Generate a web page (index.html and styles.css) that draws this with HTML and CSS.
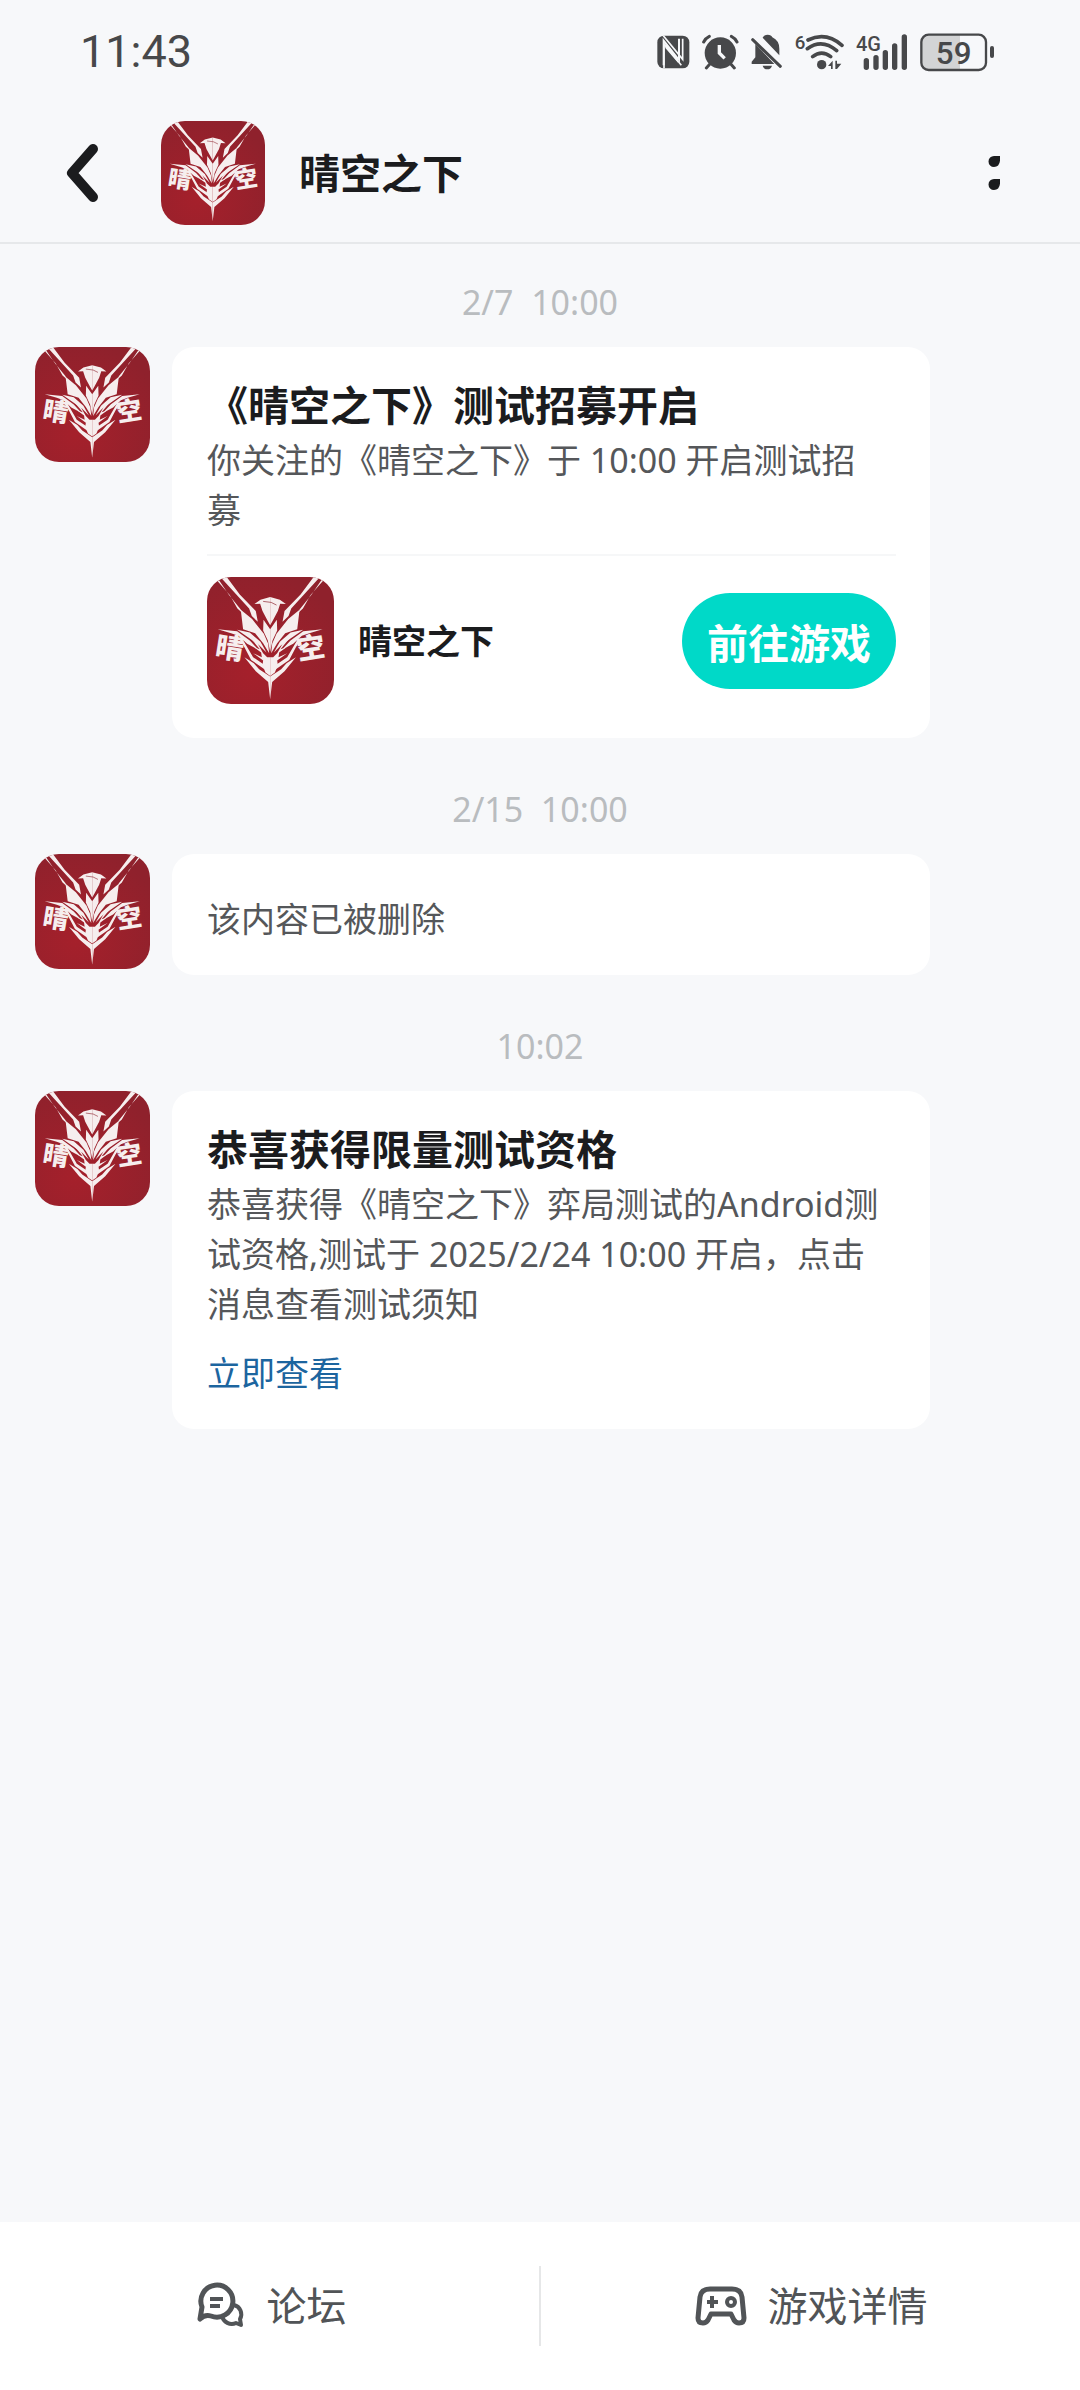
FILE: index.html
```
<!DOCTYPE html>
<html lang="zh-CN">
<head>
    <meta charset="UTF-8">
    <meta name="viewport" content="width=device-width, initial-scale=1.0">
    <title>晴空之下</title>
    <link rel="stylesheet" href="styles.css">
</head>
<body>
    <!-- 游戏图标，下面用 use 引用 -->
    <svg class="defs" aria-hidden="true">
        <defs>
            <radialGradient id="red" cx="35%" cy="75%" r="80%">
                <stop offset="0" stop-color="#a5202b"></stop>
                <stop offset="1" stop-color="#8f212c"></stop>
            </radialGradient>
            <g id="wing">
                <path d="M62 22H81L120 74L168 124L174 156L156 139L148 116Z"></path>
                <path d="M50 30L58 32L88 76L123 119L126 128L113 116L90 76Z"></path>
                <path d="M123 120L157 148L192 192L205 222L208 250L190 220L166 190L130 178Z"></path>
                <path d="M211 82L182 90L164 103L181 102L188 124L203 152L211 166Z"></path>
                <path d="M191 150L211 178V246L204 212L190 182Z"></path>
                <path d="M54 178L112 184L150 212L176 240L142 222L116 198L94 190Z"></path>
                <path d="M112 180L150 188L182 216L200 248L178 226L150 206Z"></path>
                <path d="M142 192L174 222L190 250L202 262L211 262V318L197 308L188 286L190 272L160 250L186 262L184 248L162 232L180 238Z"></path>
                <path d="M116 204L132 214L160 262L192 284L194 298L154 270L134 232Z"></path>
                <path d="M134 262L162 280L178 298L211 320V388L205 336L168 304Z"></path>
            </g>
            <symbol id="logo" viewBox="22 22 380 380">
                <rect x="22" y="22" width="380" height="380" fill="url(#red)"></rect>
                <g fill="#f6eeee">
                    <use href="#wing"></use>
                    <use href="#wing" transform="translate(422 0) scale(-1 1)"></use>
                    <text class="logo-text" x="44" y="258" transform="rotate(9 44 258)">晴</text>
                    <text class="logo-text" x="296" y="270" transform="rotate(-9 296 270)">空</text>
                </g>
                <path d="M190 95L214 98L230 106" fill="none" stroke="#8b202b" stroke-width="2"></path>
            </symbol>
        </defs>
    </svg>

    <div class="app">
        <div class="status-bar">
            <span class="clock">11:43</span>
            <div class="status-icons">
                <svg width="33" height="40" viewBox="53 36 99 120">
                    <rect x="54" y="47" width="96" height="98" rx="20" fill="#47484a"></rect>
                    <path d="M73 136V62L119 120V56" fill="none" stroke="#f7f8fa" stroke-width="6"></path>
                    <path d="M72 47L130 118V56M74 145V72L126 136" fill="none" stroke="#f7f8fa" stroke-width="5"></path>
                    <path d="M78 66L116 115V128L78 84Z" fill="#f7f8fa"></path>
                </svg>
                <svg width="37" height="40" viewBox="191 36 111 120">
                    <circle cx="246" cy="99" r="47" fill="#47484a"></circle>
                    <path d="M196 66Q202 54 213 49M296 66Q290 54 279 49M214 133L204 144M278 133L288 144" fill="none" stroke="#47484a" stroke-width="9" stroke-linecap="round"></path>
                    <path d="M243 75V99L259 115" fill="none" stroke="#f7f8fa" stroke-width="10"></path>
                </svg>
                <svg width="32" height="40" viewBox="341 36 96 120">
                    <path d="M376 53Q380 44 391 44Q402 44 405 52Q426 62 426 86V106ZM354 72L411 132H343V125L354 112ZM376 137H404Q401 148 390 148Q379 148 376 137Z" fill="#47484a"></path>
                    <path d="M346 59L429 139" stroke="#47484a" stroke-width="9" stroke-linecap="round"></path>
                </svg>
                <svg width="49" height="40" viewBox="467 36 147 120">
                    <text class="icon-text" x="466" y="88" font-size="56">6</text>
                    <path d="M506 60Q560 34 608 76M504 86Q548 54 592 92M520 110Q547 89 574 110" fill="none" stroke="#47484a" stroke-width="11" stroke-linecap="round"></path>
                    <circle cx="547" cy="134" r="14" fill="#47484a"></circle>
                    <path d="M566 138L580 122V147H575V138ZM588 122H593V131H606L593 147H588Z" fill="#47484a"></path>
                </svg>
                <svg width="52" height="40" viewBox="647 36 156 120">
                    <text class="icon-text" x="647" y="94" font-size="60">4G</text>
                    <path d="M678 122V142M707 113V142M735 98V142M763 78V142M792 51V142" stroke="#47484a" stroke-width="16" stroke-linecap="round"></path>
                </svg>
                <svg width="75" height="40" viewBox="840 36 225 120">
                    <path d="M960 45H862Q845 45 845 62V132Q845 149 862 149H960Z" fill="#d3d4d5"></path>
                    <rect x="844" y="44" width="194" height="106" rx="22" fill="none" stroke="#47484a" stroke-width="7"></rect>
                    <path d="M1056 84V108" stroke="#47484a" stroke-width="12" stroke-linecap="round"></path>
                    <text class="icon-text" x="941" y="131" font-size="94" text-anchor="middle">59</text>
                </svg>
            </div>
        </div>

        <header class="header">
            <button class="back" type="button" aria-label="返回">
                <svg width="34" height="60" viewBox="0 0 34 60">
                    <path d="M28 6L7 30L28 54" fill="none" stroke="#1b1c1e" stroke-width="10" stroke-linecap="round" stroke-linejoin="round"></path>
                </svg>
            </button>
            <svg class="logo header-logo"><use href="#logo"></use></svg>
            <h1 class="title">晴空之下</h1>
            <button class="more" type="button" aria-label="更多">
                <svg width="12" height="36" viewBox="0 0 12 36">
                    <path d="M6 1H12Q13 12 6 12A5.5 5.5 0 0 1 6 1ZM6 24H12Q13 35 6 35A5.5 5.5 0 0 1 6 24Z" fill="#1b1c1e"></path>
                </svg>
            </button>
        </header>

        <main class="messages">
            <section class="group">
                <time class="time">2/7&nbsp; 10:00</time>
                <div class="message">
                    <svg class="logo avatar"><use href="#logo"></use></svg>
                    <div class="card">
                        <h2 class="title">《晴空之下》测试招募开启</h2>
                        <p class="text">你关注的《晴空之下》于 10:00 开启测试招募</p>
                        <div class="game">
                            <svg class="logo game-logo"><use href="#logo"></use></svg>
                            <span class="game-name">晴空之下</span>
                            <button class="go" type="button">前往游戏</button>
                        </div>
                    </div>
                </div>
            </section>

            <section class="group">
                <time class="time">2/15&nbsp; 10:00</time>
                <div class="message">
                    <svg class="logo avatar"><use href="#logo"></use></svg>
                    <div class="card">
                        <p class="text">该内容已被删除</p>
                    </div>
                </div>
            </section>

            <section class="group">
                <time class="time">10:02</time>
                <div class="message">
                    <svg class="logo avatar"><use href="#logo"></use></svg>
                    <div class="card">
                        <h2 class="title">恭喜获得限量测试资格</h2>
                        <p class="text">恭喜获得《晴空之下》弈局测试的Android测试资格,测试于 2025/2/24 10:00 开启，点击消息查看测试须知</p>
                        <a class="link" href="#">立即查看</a>
                    </div>
                </div>
            </section>
        </main>

        <nav class="footer">
            <a class="tab" href="#">
                <svg width="54" height="54" viewBox="0 0 54 54">
                    <path d="M7 40L9 28A16 16 0 1 1 18 37Q12 35 7 40Z" fill="none" stroke="#515457" stroke-width="5" stroke-linejoin="round"></path>
                    <path d="M17 20H30M17 27H27" stroke="#515457" stroke-width="4"></path>
                    <path d="M41 26A9.500 9.500 0 0 1 47 40L48 46L43 44A10 10 0 0 1 29 37" fill="none" stroke="#515457" stroke-width="4" stroke-linejoin="round"></path>
                </svg>
                <span>论坛</span>
            </a>
            <a class="tab" href="#">
                <svg width="54" height="54" viewBox="0 0 54 54">
                    <path d="M16 10H38Q47 10 48 18L50 39Q50 44 45 44Q42 44 40 41L37 35H17L14 41Q12 44 9 44Q4 44 4 39L6 18Q7 10 16 10Z" fill="none" stroke="#515457" stroke-width="5" stroke-linejoin="round"></path>
                    <path d="M13 23H24M18 17V29" stroke="#515457" stroke-width="4"></path>
                    <circle cx="37" cy="23" r="4" fill="none" stroke="#515457" stroke-width="4"></circle>
                </svg>
                <span>游戏详情</span>
            </a>
        </nav>
    </div>
</body>
</html>
```
FILE: styles.css
```
* {
    margin: 0;
    padding: 0;
    box-sizing: border-box;
}
body {
    background-color: #f7f8fa;
    color: #1b1c1e;
    font-family: "Noto Sans", "Noto Sans CJK SC", sans-serif;
    font-size: 34px;
    line-height: 50px;
}
button {
    border: none;
    background: none;
    font-family: inherit;
    cursor: pointer;
}
a {
    text-decoration: none;
}
svg {
    display: block;
    flex-shrink: 0;
}
.defs {
    position: absolute;
    width: 0;
    height: 0;
}
.app {
    display: flex;
    flex-direction: column;
    min-height: 100vh;
}

/* 状态栏 */
.status-bar {
    display: flex;
    justify-content: space-between;
    align-items: center;
    height: 104px;
    padding: 0 85px 0 80px;
}
.clock {
    font-family: Roboto, sans-serif;
    font-size: 45px;
    color: #47484a;
}
.status-icons {
    display: flex;
    gap: 12px;
}
.icon-text {
    font-family: Roboto, sans-serif;
    font-weight: 500;
    fill: #47484a;
}

/* 顶部 */
.header {
    display: flex;
    align-items: center;
    height: 140px;
    padding: 0 80px 0 65px;
    border-bottom: 2px solid #e6e8ea;
}
.logo {
    border-radius: 24px;
}
.logo-text {
    font-family: "Noto Sans CJK SC", sans-serif;
    font-size: 84px;
    font-weight: 900;
}
.header-logo {
    width: 104px;
    height: 104px;
    margin: 0 34px 0 62px;
}
.title {
    font-size: 41px;
    line-height: 48px;
    font-weight: 700;
}
.more {
    margin-left: auto;
}

/* 消息列表 */
.messages {
    flex: 1;
    display: flex;
    flex-direction: column;
    gap: 46px;
    padding: 33px 150px 46px 35px;
}
.time {
    display: block;
    /* 抵消两侧不同的内边距，让时间相对整屏居中 */
    margin: 0 -115px 20px 0;
    text-align: center;
    color: #b9bcbf;
}
.message {
    display: flex;
    align-items: flex-start;
    gap: 22px;
}
.avatar {
    width: 115px;
    height: 115px;
}
.card {
    flex: 1;
    padding: 34px 34px 31px 35px;
    border-radius: 22px;
    background-color: white;
}
.text {
    margin-top: 6px;
    padding-right: 8px;
    color: #55575a;
}
.game {
    display: flex;
    align-items: center;
    margin-top: 19px;
    padding: 21px 0 3px;
    border-top: 2px solid #f6f7f8;
}
.game-logo {
    width: 127px;
    height: 127px;
}
.game-name {
    margin-left: 24px;
    font-weight: 700;
}
.go {
    margin-left: auto;
    height: 96px;
    padding: 0 25px;
    border-radius: 48px;
    background-color: #00d9c8;
    color: white;
    font-size: 41px;
    font-weight: 700;
}
.link {
    display: block;
    width: fit-content;
    margin-top: 19px;
    color: #1c659f;
}

/* 底部 */
.footer {
    display: flex;
    padding: 44px 0;
    background-color: white;
}
.tab {
    flex: 1;
    display: flex;
    justify-content: center;
    align-items: center;
    gap: 20px;
    height: 80px;
    color: #515457;
    font-size: 40px;
}
.tab + .tab {
    border-left: 2px solid #e6e7e8;
}
```
